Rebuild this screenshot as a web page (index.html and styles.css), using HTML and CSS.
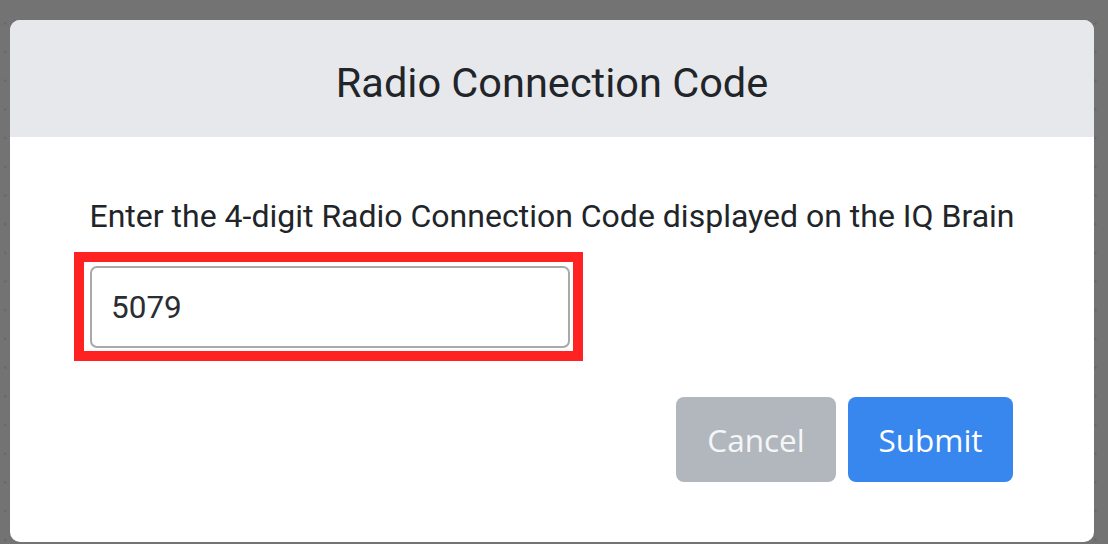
FILE: index.html
```html
<!DOCTYPE html>
<html lang="en">
<head>
<meta charset="utf-8">
<title>Radio Connection Code</title>
<link rel="stylesheet" href="styles.css">
</head>
<body>
<div class="modal">
  <div class="modal-header">
    <h1 class="modal-title">Radio Connection Code</h1>
  </div>
  <div class="modal-body">
    <p class="prompt">Enter the 4-digit Radio Connection Code displayed on the IQ Brain</p>
    <div class="highlight">
      <input class="code-input" type="text" value="5079">
    </div>
    <div class="actions">
      <button class="btn btn-cancel">Cancel</button>
      <button class="btn btn-submit">Submit</button>
    </div>
  </div>
</div>
</body>
</html>
```
FILE: styles.css
```css
html, body {
  margin: 0;
  padding: 0;
}
body {
  width: 1108px;
  height: 544px;
  overflow: hidden;
  background-color: #737373;
  background-image: radial-gradient(circle, #676767 0.9px, rgba(0,0,0,0) 1.6px);
  background-size: 28.7px 28.7px;
  background-position: -9px 9px;
  font-family: Roboto, "Liberation Sans", sans-serif;
}
.modal {
  margin: 20px 0 0 10px;
  width: 1084px;
  height: 522px;
  background: #ffffff;
  border-radius: 10px;
  overflow: hidden;
  display: flex;
  flex-direction: column;
}
.modal-header {
  height: 117px;
  background: #e7e8eb;
  display: flex;
  align-items: center;
  justify-content: center;
}
.modal-title {
  margin: 0;
  font-family: Roboto, sans-serif;
  font-weight: 400;
  font-size: 41.5px;
  color: #212529;
  padding-top: 7px;
}
.modal-body {
  padding: 60px 0 0 64px;
  display: flex;
  flex-direction: column;
}
.prompt {
  margin: 0 0 0 -64px;
  text-align: center;
  font-size: 32px;
  color: #212529;
}
.highlight {
  margin-top: 17px;
  align-self: flex-start;
  border: 10px solid #fe2222;
  padding: 4px 3px 3px 6px;
}
.code-input {
  display: block;
  box-sizing: border-box;
  width: 480px;
  height: 82px;
  border: 2px solid #a9a9a9;
  border-radius: 7px;
  padding: 0 0 0 19px;
  margin: 0;
  font-family: Roboto, sans-serif;
  font-size: 31.5px;
  color: #2a2d31;
  background: #fff;
  outline: none;
}
.actions {
  margin-top: 36px;
  margin-right: 81px;
  display: flex;
  justify-content: flex-end;
  gap: 12px;
}
.btn {
  height: 85px;
  border: none;
  border-radius: 8px;
  font-family: "Open Sans", sans-serif;
  font-size: 31.5px;
  color: #f4f6f8;
  padding: 0;
  cursor: pointer;
}
.btn-cancel {
  width: 160px;
  background: #b1b7bd;
}
.btn-submit {
  width: 165px;
  background: #3787ee;
  color: #ffffff;
}
```
